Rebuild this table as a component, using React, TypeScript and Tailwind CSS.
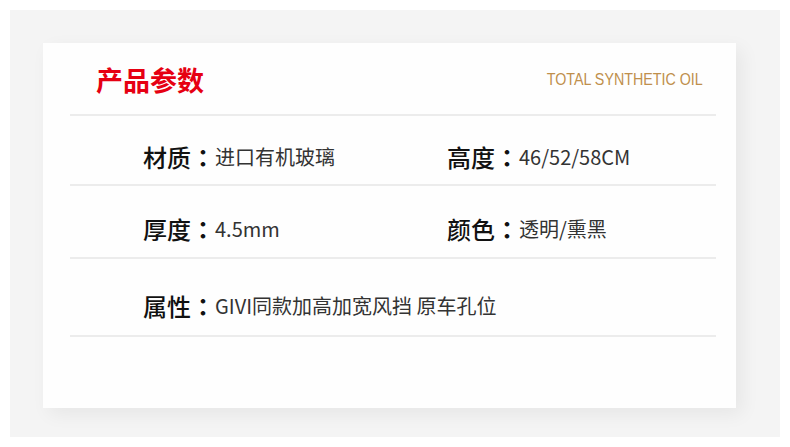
const cjk = "font-['Noto_Sans_CJK_SC','Noto_Sans',sans-serif]";

const Field = ({ label, value }: { label: string; value: string }) => {
  return (
    <div className="flex items-center leading-none">
      <span className="text-[24px] font-medium text-[#111]">{label}</span>
      <span className="w-[24px] text-[24px] font-bold text-[#111] font-['Noto_Sans_CJK_TC',sans-serif] text-center">
        ：
      </span>
      <span className="text-[20px] text-[#333]">{value}</span>
    </div>
  );
};

const App = () => {
  return (
    <div className={`w-[790px] h-[447px] bg-white p-[10px] ${cjk}`}>
      <div className="h-[427px] w-[770px] bg-[#f4f4f4] pt-[33px] pl-[33px]">
        <div className="w-[693px] h-[365px] bg-[#fefefe] pl-[27px] pr-[20px] shadow-[6px_6px_18px_rgba(0,0,0,0.06)]">
          <div className="h-[71px] flex items-center justify-between pl-[26px] pr-[13px] pt-[2px]">
            <h1 className="text-[27px] font-bold text-[#e60012] leading-none">产品参数</h1>
            {/* narrow geometric face in the source, squeezed to fit */}
            <span className="inline-block origin-right scale-x-[0.84] text-[17px] text-[#bf8f4c] font-['Liberation_Sans',sans-serif] leading-none">
              TOTAL SYNTHETIC OIL
            </span>
          </div>
          <div className="h-[2px] bg-[#ececec]" />

          <div className="h-[68px] pt-[29px] pl-[73px] flex items-start">
            <div className="w-[304px]">
              <Field label="材质" value="进口有机玻璃" />
            </div>
            <Field label="高度" value="46/52/58CM" />
          </div>
          <div className="h-[2px] bg-[#ececec]" />

          <div className="h-[71px] pt-[31px] pl-[73px] flex items-start">
            <div className="w-[304px]">
              <Field label="厚度" value="4.5mm" />
            </div>
            <Field label="颜色" value="透明/熏黑" />
          </div>
          <div className="h-[2px] bg-[#ececec]" />

          <div className="h-[76px] pt-[35px] pl-[73px] flex items-start">
            <Field label="属性" value="GIVI同款加高加宽风挡 原车孔位" />
          </div>
          <div className="h-[2px] bg-[#ececec]" />
        </div>
      </div>
    </div>
  );
};

export default App;
